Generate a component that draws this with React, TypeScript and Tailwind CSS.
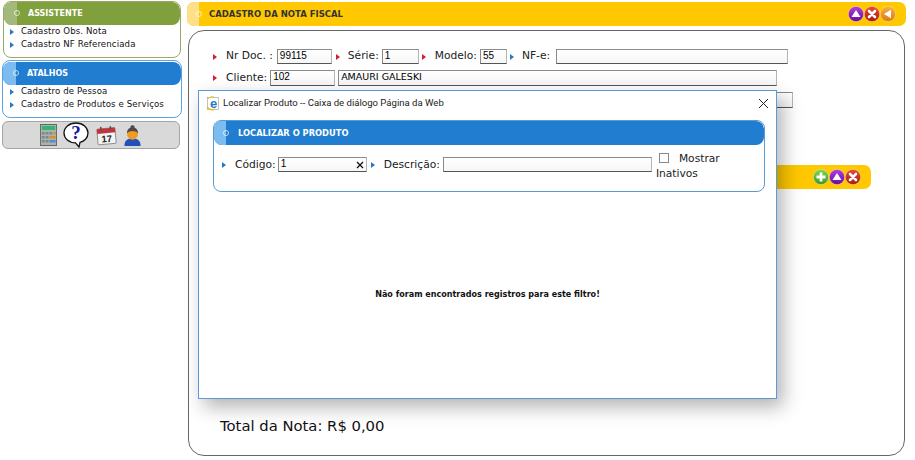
import React from 'react';

const verdana = "font-['DejaVu_Sans',sans-serif]";

const Arrow = ({ color = 'border-l-[#d81e2c]' }: { color?: string }) => (
  <span className={`block w-0 h-0 border-y-[3px] border-y-transparent border-l-[4px] shrink-0 ${color}`} />
);

const TextBox = ({
  value = '',
  className = '',
  textClass = "text-[10px] font-['Liberation_Sans',sans-serif]",
}: {
  value?: string;
  className?: string;
  textClass?: string;
}) => (
  <div
    className={`h-[15px] border border-t-[#8a8a8a] border-l-[#8a8a8a] border-r-[#b5b5b5] border-b-[#555] bg-gradient-to-b from-white to-[#f6f6f6] leading-[12px] pl-[2px] text-black shrink-0 ${textClass} ${className}`}
  >
    {value}
  </div>
);

const RoundButton = ({ from, to, kind }: { from: string; to: string; kind: 'up' | 'close' | 'back' | 'add' }) => (
  <svg width="16" height="16" viewBox="0 0 16 16" className="shrink-0">
    <defs>
      <linearGradient id={`g-${kind}-${from.slice(1)}`} x1="0" y1="0" x2="0" y2="1">
        <stop offset="0" stopColor={from} />
        <stop offset="1" stopColor={to} />
      </linearGradient>
    </defs>
    <circle cx="8" cy="8" r="7.6" fill={`url(#g-${kind}-${from.slice(1)})`} stroke="#ffffff" strokeOpacity="0.5" strokeWidth="0.6" />
    {kind === 'up' && <path d="M8 4 L12.5 11 H3.5 Z" fill="#fff" />}
    {kind === 'close' && <path d="M5 5 L11 11 M11 5 L5 11" stroke="#fff" strokeWidth="2.6" strokeLinecap="round" />}
    {kind === 'back' && <path d="M4 8 L11 3.8 V12.2 Z" fill="#fff" />}
    {kind === 'add' && <path d="M8 3.5 V12.5 M3.5 8 H12.5" stroke="#fff" strokeWidth="2.8" />}
  </svg>
);

const Calculator = () => (
  <svg width="17" height="22" viewBox="0 0 18 22" preserveAspectRatio="none">
    <rect x="0.5" y="0.5" width="17" height="21" fill="#aab4a8" stroke="#5f6b62" />
    <rect x="2" y="2" width="14" height="4" fill="#37b27a" />
    <g fill="#7d8790">
      <rect x="2" y="8" width="3" height="2.5" /><rect x="6" y="8" width="3" height="2.5" /><rect x="10" y="8" width="3" height="2.5" />
      <rect x="2" y="12" width="3" height="2.5" /><rect x="6" y="12" width="3" height="2.5" />
      <rect x="2" y="16" width="3" height="2.5" /><rect x="6" y="16" width="3" height="2.5" />
    </g>
    <rect x="14" y="8" width="2.5" height="2.5" fill="#d98a3a" />
    <rect x="10" y="12" width="6.5" height="2.5" fill="#d98a3a" />
    <rect x="10" y="16" width="6.5" height="2.5" fill="#4a8fd0" />
  </svg>
);

const HelpBubble = () => (
  <div className="relative w-[26px] h-[26px] shrink-0">
    <svg width="26" height="26" viewBox="0 0 26 26" className="absolute inset-0">
      <path d="M13 1 C20 1 25 5.5 25 11 C25 16 21 19.5 17 20.3 L16 25 L12.5 20.8 C6 20.8 1 16.5 1 11 C1 5.5 6 1 13 1 Z" fill="#fff" stroke="#111" strokeWidth="1.3" />
    </svg>
    <span className="absolute inset-x-0 top-0 text-center text-[19px] leading-[22px] font-bold text-[#16169a] font-['Liberation_Serif',serif]">?</span>
  </div>
);

const CalendarIcon = () => (
  <svg width="21" height="21" viewBox="0 0 22 21">
    <g transform="rotate(-5 11 11)">
      <rect x="1.5" y="3" width="19" height="16.5" rx="1" fill="#f4f4f4" stroke="#666" strokeWidth="0.7" />
      <rect x="1.5" y="3" width="19" height="5" fill="#c8323a" />
      <rect x="5" y="1" width="1.6" height="4" fill="#555" />
      <rect x="15" y="1" width="1.6" height="4" fill="#555" />
      <text x="11" y="17.5" textAnchor="middle" fontSize="10" fontWeight="700" fontFamily="Liberation Sans" fill="#222">17</text>
    </g>
  </svg>
);

const PersonIcon = () => (
  <svg width="19" height="23" viewBox="0 0 20 23">
    <path d="M1.5 22.5 C1.5 16.5 5 14.5 10 14.5 C15 14.5 18.5 16.5 18.5 22.5 Z" fill="#2450b8" />
    <ellipse cx="10" cy="10" rx="5.8" ry="6" fill="#ee9a24" />
    <path d="M4.2 9 C4.2 5 7 3.5 8 3 C7.5 1.5 8.5 0.8 10 0.8 C11.5 0.8 12.5 1.5 12 3 C13 3.5 15.8 5 15.8 9 C13 6 7 6 4.2 9 Z" fill="#4a4a4a" />
  </svg>
);

const IeIcon = () => (
  <svg width="15" height="15" viewBox="0 0 15 15">
    <rect x="1.5" y="1.5" width="11" height="12" fill="#fff" stroke="#9a9a9a" strokeWidth="0.6" />
    <text x="7.5" y="11.5" textAnchor="middle" fontSize="13" fontWeight="700" fontFamily="Liberation Sans" fill="#1f78c8">e</text>
    <path d="M1 11 C3 14 7 14.5 9 13" stroke="#e8c020" strokeWidth="1.4" fill="none" />
    <path d="M2 3 C3 1 6 0.5 8 1" stroke="#e8c020" strokeWidth="1" fill="none" />
  </svg>
);

const SideBox = ({
  title,
  links,
  boxClass,
  headerClass,
  tabClass,
  listClass,
}: {
  title: string;
  links: string[];
  boxClass: string;
  headerClass: string;
  tabClass: string;
  listClass: string;
}) => (
  <div className={`rounded-[8px] border bg-white overflow-hidden ${boxClass}`}>
    <div className={`h-[23px] flex items-center rounded-[8px] overflow-hidden ${headerClass}`}>
      <div className={`relative w-[13px] h-full mr-[11px] shrink-0 ${tabClass}`}>
        <span className="absolute -right-[3px] top-[8px] w-[6px] h-[6px] rounded-full border border-white/70" />
      </div>
      <span className="text-[8px] font-bold text-white">{title}</span>
    </div>
    <div className={listClass}>
      {links.map((l) => (
        <div key={l} className="h-[13px] flex items-center gap-[7px] text-[8.6px] tracking-[0.12px] text-[#111]">
          <Arrow color="border-l-[#2a78c4]" />
          <span className="whitespace-nowrap">{l}</span>
        </div>
      ))}
    </div>
  </div>
);

const Field = ({ label, className = '' }: { label: string; className?: string }) => (
  <span className={`text-[10.7px] text-[#222] whitespace-nowrap ${className}`}>{label}</span>
);

export default function App() {
  return (
    <div className={`relative w-[915px] h-[460px] overflow-hidden bg-white flex ${verdana}`}>
      {/* Sidebar */}
      <div className="w-[187px] shrink-0 pt-px pl-[2px] pr-[5px] flex flex-col">
        <div className="ml-px mr-px">
          <SideBox
            title="ASSISTENTE"
            links={['Cadastro Obs. Nota', 'Cadastro NF Referenciada']}
            boxClass="h-[57px] border-[#9aa96a]"
            headerClass="bg-[#7fa03c]"
            tabClass="bg-[#a3b97a]"
            listClass="pl-[6px]"
          />
        </div>
        <div className="mt-[2px]">
          <SideBox
            title="ATALHOS"
            links={['Cadastro de Pessoa', 'Cadastro de Produtos e Serviços']}
            boxClass="h-[58px] border-[#5ba3e0] pt-px"
            headerClass="bg-[#217dcf]"
            tabClass="bg-[#7dbcf0]"
            listClass="pl-[7px]"
          />
        </div>
        <div className="mt-[3px] h-[28px] w-[178px] rounded-[6px] border border-[#a5a5a5] bg-[#d9d9d9] flex items-center justify-center gap-[6px]">
          <Calculator />
          <HelpBubble />
          <span className="ml-[1px] flex"><CalendarIcon /></span>
          <PersonIcon />
        </div>
      </div>

      {/* Main */}
      <div className="w-[720px] pt-[2px] flex flex-col">
        <div className="w-[719px] h-[24px] rounded-[7px] bg-[#ffc800] flex items-center overflow-hidden">
          <div className="relative w-[12px] h-full bg-[#ffe08a] shrink-0">
            <span className="absolute -right-[3px] top-[9px] w-[6px] h-[6px] rounded-full border border-white/70" />
          </div>
          <span className="ml-[10px] text-[8.5px] font-bold text-[#333]">CADASTRO DA NOTA FISCAL</span>
          <div className="ml-auto mr-[10px] flex items-center">
            <RoundButton from="#b040e0" to="#6a0a9a" kind="up" />
            <RoundButton from="#e84a3a" to="#a81a10" kind="close" />
            <RoundButton from="#f8b040" to="#e07a10" kind="back" />
          </div>
        </div>

        <div className="mt-[4px] w-[717px] ml-px h-[426px] rounded-[16px] border border-[#666] flex flex-col">
          <div className="pl-[24px] pt-[18px] flex items-center h-[33px]">
            <Arrow />
            <Field label="Nr Doc. :" className="ml-[9px]" />
            <TextBox value="99115" className="w-[55px] ml-[4px]" />
            <span className="ml-[4px] flex"><Arrow /></span>
            <Field label="Série:" className="ml-[8px]" />
            <TextBox value="1" className="w-[37px] ml-[3px]" />
            <span className="ml-[3px] flex"><Arrow /></span>
            <Field label="Modelo:" className="ml-[9px]" />
            <TextBox value="55" className="w-[27px] ml-[3px]" />
            <span className="ml-[3px] flex"><Arrow color="border-l-[#2a78c4]" /></span>
            <Field label="NF-e:" className="ml-[8px]" />
            <TextBox className="w-[232px] ml-[6px]" />
          </div>
          <div className="pl-[24px] pt-[6px] flex items-center h-[22px]">
            <Arrow />
            <Field label="Cliente:" className="ml-[9px]" />
            <TextBox value="102" className="w-[65px] h-[16px] ml-[3px]" />
            <TextBox
              value="AMAURI GALESKI"
              className="w-[439px] h-[16px] ml-[3px]"
              textClass="text-[9.5px] font-['DejaVu_Sans',sans-serif]"
            />
          </div>
          <div className="pt-[6px] h-[22px] flex justify-end pr-[111px]">
            <TextBox className="w-[30px] h-[16px]" />
          </div>
          <div className="mt-[57px] ml-[9px] w-[673px] h-[24px] rounded-[7px] bg-[#ffc800] flex items-center justify-end pr-[10px]">
            <RoundButton from="#80d850" to="#3a9a20" kind="add" />
            <RoundButton from="#b040e0" to="#6a0a9a" kind="up" />
            <RoundButton from="#e84a3a" to="#a81a10" kind="close" />
          </div>
          <div className="mt-auto mb-[20px] pl-[31px] text-[14.8px] leading-[18px] text-[#111]">Total da Nota: R$ 0,00</div>
        </div>
      </div>

      {/* Dialog over the page */}
      <div className="absolute left-[198px] top-[90px] w-[579px] h-[309px] bg-white border border-[#5b9bd5] shadow-[6px_8px_18px_rgba(0,0,0,0.3)] flex flex-col">
        <div className="h-[24px] flex items-center pl-[7px] pr-[6px] shrink-0">
          <IeIcon />
          <span className="ml-[2px] text-[9.55px] text-[#222] font-['Roboto',sans-serif] whitespace-nowrap">
            Localizar Produto -- Caixa de diálogo Página da Web
          </span>
          <svg width="11" height="11" viewBox="0 0 11 11" className="ml-auto mr-[1px]">
            <path d="M1 1 L10 10 M10 1 L1 10" stroke="#222" strokeWidth="1" />
          </svg>
        </div>
        <div className="mt-[5px] ml-[14px] w-[552px] h-[72px] rounded-[8px] border border-[#5b9bd5] overflow-hidden shrink-0">
          <div className="h-[24px] bg-[#217dcf] rounded-[8px] flex items-center overflow-hidden">
            <div className="relative w-[12px] h-full bg-[#7dbcf0] shrink-0">
              <span className="absolute -right-[3px] top-[9px] w-[6px] h-[6px] rounded-full border border-white/70" />
            </div>
            <span className="ml-[12px] text-[8.3px] font-bold text-white">LOCALIZAR O PRODUTO</span>
          </div>
          <div className="relative h-[47px] flex items-start pl-[8px] pt-[12px]">
            <span className="mt-[5px] flex"><Arrow color="border-l-[#2a78c4]" /></span>
            <Field label="Código:" className="ml-[9px] text-[10.5px]" />
            <div className="relative ml-[2px]">
              <TextBox value="1" className="w-[89px]" />
              <svg width="8" height="8" viewBox="0 0 8 8" className="absolute right-[3px] top-[4px]">
                <path d="M1 1 L7 7 M7 1 L1 7" stroke="#111" strokeWidth="1.3" />
              </svg>
            </div>
            <span className="ml-[4px] mt-[5px] flex"><Arrow color="border-l-[#2a78c4]" /></span>
            <Field label="Descrição:" className="ml-[9px] text-[10.5px]" />
            <TextBox className="w-[209px] ml-[3px]" />
            <div className="ml-[4px] -mt-[6px] w-[66px] text-[10.7px] leading-[15px] text-[#222]">
              <span className="inline-block w-[10px] h-[10px] border border-[#888] align-[-1px] ml-[3px] mr-[10px]" />
              Mostrar Inativos
            </div>
          </div>
        </div>
        <div className="flex-1 flex items-center justify-center">
          <span className="text-[8.05px] font-bold text-[#111]">Não foram encontrados registros para este filtro!</span>
        </div>
      </div>
    </div>
  );
}
